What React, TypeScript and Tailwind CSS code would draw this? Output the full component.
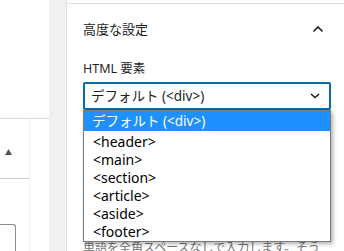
import React from 'react';

const options = ['<header>', '<main>', '<section>', '<article>', '<aside>', '<footer>'];

const ChevronUp = () => (
  <svg width="12" height="8" viewBox="0 0 12 8" fill="none">
    <path d="M1.5 6.5 L6 2 L10.5 6.5" stroke="#1e1e1e" strokeWidth="1.6" />
  </svg>
);

const ChevronDown = () => (
  <svg width="10" height="6" viewBox="0 0 10 6" fill="none">
    <path d="M1 1 L5 4.6 L9 1" stroke="#1e1e1e" strokeWidth="1.5" />
  </svg>
);

export default function App() {
  return (
    <div
      className="relative flex h-[251px] w-[344px] overflow-hidden bg-white text-[#1e1e1e]"
      style={{ fontFamily: '"Noto Sans", "Noto Sans CJK JP", sans-serif' }}
    >
      {/* left editor area */}
      <div className="flex w-[49px] shrink-0 flex-col">
        <div className="h-[119px] shrink-0 border-b border-[#dddddd]" />
        <div className="flex flex-1">
          <div className="flex w-[30px] flex-col border-r border-[#f3f3f3]">
            <div className="flex h-[60px] shrink-0 items-end border-b border-[#cccccc] pb-[23px] pl-[5px]">
              <svg width="7" height="6" viewBox="0 0 7 6">
                <path d="M3.5 0 L7 6 L0 6 Z" fill="#555" />
              </svg>
            </div>
            <div className="mt-[45px] h-[40px] w-[16px] shrink-0 rounded-tr-[3px] border-t border-r border-[#8c8c8c]" />
          </div>
        </div>
      </div>

      {/* gray gutter */}
      <div className="w-[18px] shrink-0 border-r border-[#e0e0e0] bg-[#f0f0f0]" />

      {/* settings panel */}
      <div className="relative flex-1 pt-[3px]">
        <div className="border-t border-[#e0e0e0] pl-[16px] pr-[13px]">
          <div className="flex h-[52px] items-center justify-between">
            <span className="text-[13px]">高度な設定</span>
            <span className="mr-[7px] mb-[2px]">
              <ChevronUp />
            </span>
          </div>
          <div className="mt-[4px] text-[12.5px] leading-[18px] text-[#1e1e1e]">HTML 要素</div>
          <div className="mt-[4px] flex h-[28px] items-center justify-between rounded-[2px] border-2 border-[#0a6ca3] pl-[6px] pr-[9px]">
            <span className="text-[13.5px]">デフォルト (&lt;div&gt;)</span>
            <ChevronDown />
          </div>
          <div className="mt-[52px] h-[30px] rounded-[2px] border border-[#757575]" />
          <div className="mt-[48px] whitespace-nowrap text-[12px] leading-[16px] text-[#757575]">
            単語を全角スペースなしで入力します。そう
          </div>
        </div>

        {/* open option list */}
        <div className="absolute left-[16px] top-[110px] w-[248px] border border-[#7a7a7a] bg-white pb-[1px] shadow-[2px_2px_4px_rgba(0,0,0,0.3)]">
          <div className="flex h-[20px] items-center bg-[#1e90ff] pl-[8px] text-[13.5px] text-white">
            デフォルト (&lt;div&gt;)
          </div>
          <div className="pt-[1px]">
            {options.map((o) => (
              <div key={o} className="flex h-[18px] items-center pl-[9px] text-[14px] text-black">
                {o}
              </div>
            ))}
          </div>
        </div>
      </div>
    </div>
  );
}
